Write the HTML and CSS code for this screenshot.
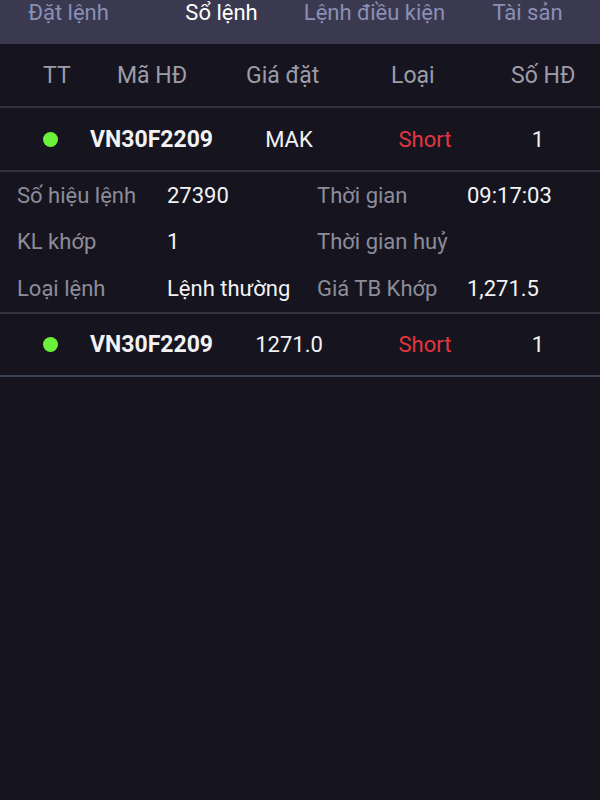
FILE: index.html
```html
<!DOCTYPE html>
<html lang="vi">
<head>
  <meta charset="UTF-8">
  <title>Sổ lệnh</title>
  <link rel="stylesheet" href="styles.css">
</head>
<body>

<div class="tabs">
  <div class="tab">Đặt lệnh</div>
  <div class="tab active">Sổ lệnh</div>
  <div class="tab">Lệnh điều kiện</div>
  <div class="tab">Tài sản</div>
</div>

<div class="head">
  <span>TT</span>
  <span>Mã HĐ</span>
  <span>Giá đặt</span>
  <span>Loại</span>
  <span>Số HĐ</span>
</div>

<div class="order">
  <span class="dot"></span>
  <span class="code">VN30F2209</span>
  <span class="mid">MAK</span>
  <span class="mid short">Short</span>
  <span class="mid">1</span>
</div>

<div class="detail">
  <span class="label">Số hiệu lệnh</span>
  <span class="value">27390</span>
  <span class="label">Thời gian</span>
  <span class="value">09:17:03</span>

  <span class="label">KL khớp</span>
  <span class="value">1</span>
  <span class="label">Thời gian huỷ</span>
  <span class="value"></span>

  <span class="label">Loại lệnh</span>
  <span class="value">Lệnh thường</span>
  <span class="label">Giá TB Khớp</span>
  <span class="value">1,271.5</span>
</div>

<div class="order last">
  <span class="dot"></span>
  <span class="code">VN30F2209</span>
  <span class="mid">1271.0</span>
  <span class="mid short">Short</span>
  <span class="mid">1</span>
</div>

</body>
</html>
```

FILE: styles.css
```css
body {
  margin: 0;
  height: 800px;
  background: #16151f;
  font-family: Roboto, "Noto Sans", sans-serif;
  color: #f2f2f4;
  overflow: hidden;
}

.tabs {
  height: 44px;
  background: #3a394f;
  display: grid;
  grid-template-columns: repeat(4, 153px);
  margin-left: -8px;
}

.tab {
  text-align: center;
  font-size: 22px;
  line-height: 26px;
  color: #8a8fb6;
  position: relative;
}

.tab.active {
  color: #ffffff;
}

.tab.active::after {
  content: "";
  position: absolute;
  left: 50%;
  bottom: -18px;
  margin-left: -11px;
  border-left: 11px solid transparent;
  border-right: 11px solid transparent;
  border-bottom: 11px solid #16151f;
}

.head {
  height: 62px;
  display: grid;
  grid-template-columns: 74px 129px 145px 120px auto;
  align-items: center;
  padding-left: 43px;
  font-size: 23px;
  color: #9d9ca8;
  border-bottom: 2px solid #33323f;
}

.order {
  height: 62px;
  display: grid;
  grid-template-columns: 47px 140px 118px 154px 72px;
  align-items: center;
  padding-left: 43px;
  font-size: 22px;
  border-bottom: 2px solid #33323f;
}

.order.last {
  height: 61px;
  border-bottom-color: #3b4357;
}

.dot {
  width: 15px;
  height: 15px;
  border-radius: 50%;
  background: #6cf13a;
}

.code {
  font-size: 23px;
  font-weight: bold;
}

.mid {
  text-align: center;
}

.short {
  color: #e3363f;
}

.detail {
  display: grid;
  grid-template-columns: repeat(4, 150px);
  grid-auto-rows: 46.67px;
  align-items: center;
  padding-left: 17px;
  font-size: 22px;
  border-bottom: 2px solid #33323f;
}

.label {
  color: #8d8c99;
}
```
